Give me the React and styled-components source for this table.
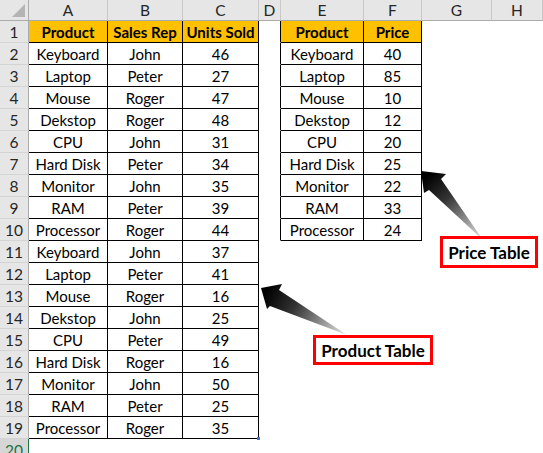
import styled, { createGlobalStyle } from 'styled-components';

const GlobalStyle = createGlobalStyle`
  html, body {
    margin: 0;
    padding: 0;
    background: #fff;
  }
  body {
    font-family: Lato, "Liberation Sans", sans-serif;
  }
`;

const Sheet = styled.div`
  position: relative;
  width: 543px;
  height: 453px;
  overflow: hidden;
  background: #fff;
`;

const Grid = styled.div`
  display: grid;
  grid-template-columns: 29px 79px 75px 76px 22px 83px 58px 70px 51px;
  grid-template-rows: 21px repeat(20, 22px);
  font-size: 15px;
  color: #000;
`;

const Corner = styled.div`
  position: relative;
  background: #e6e6e6;
  border-right: 1px solid #ababab;
  border-bottom: 1px solid #ababab;
  box-sizing: border-box;

  svg {
    position: absolute;
    right: 3px;
    bottom: 3px;
  }
`;

const ColHead = styled.div`
  display: flex;
  align-items: center;
  justify-content: center;
  background: #e6e6e6;
  border-right: 1px solid #c8c8c8;
  border-bottom: 1px solid #ababab;
  box-sizing: border-box;
  color: #262626;
  font-size: 15.5px;
`;

const RowHead = styled.div`
  display: flex;
  align-items: center;
  justify-content: center;
  background: ${(p) => (p.$active ? '#d6d6d6' : '#e6e6e6')};
  border-right: 1px solid ${(p) => (p.$active ? '#217346' : '#ababab')};
  border-bottom: 1px solid #d4d4d4;
  box-sizing: border-box;
  color: ${(p) => (p.$active ? '#217346' : '#262626')};
  font-size: 15.5px;
`;

const Cell = styled.div`
  position: relative;
  display: flex;
  align-items: center;
  justify-content: center;
  box-sizing: border-box;
  background: ${(p) => (p.$head ? '#ffc000' : 'transparent')};
  font-weight: ${(p) => (p.$head ? 700 : 400)};
  border-right: 1px solid ${(p) => (p.$right ? '#000' : 'transparent')};
  border-bottom: 1px solid ${(p) => (p.$bottom ? '#000' : 'transparent')};
  white-space: nowrap;
`;

const Handle = styled.span`
  position: absolute;
  right: -2px;
  bottom: -2px;
  width: 3px;
  height: 3px;
  background: #4472c4;
`;

const Arrows = styled.svg`
  position: absolute;
  left: 0;
  top: 0;
  pointer-events: none;
`;

const Label = styled.div`
  position: absolute;
  left: ${(p) => p.$x}px;
  top: ${(p) => p.$y}px;
  width: ${(p) => p.$w}px;
  height: ${(p) => p.$h}px;
  box-sizing: border-box;
  border: 3px solid #ff0000;
  background: #fff;
  display: flex;
  align-items: center;
  justify-content: center;
  font-weight: 700;
  font-size: 17px;
  color: #000;
`;

const letters = ['A', 'B', 'C', 'D', 'E', 'F', 'G', 'H'];

const products = [
  ['Keyboard', 'John', 46],
  ['Laptop', 'Peter', 27],
  ['Mouse', 'Roger', 47],
  ['Dekstop', 'Roger', 48],
  ['CPU', 'John', 31],
  ['Hard Disk', 'Peter', 34],
  ['Monitor', 'John', 35],
  ['RAM', 'Peter', 39],
  ['Processor', 'Roger', 44],
  ['Keyboard', 'John', 37],
  ['Laptop', 'Peter', 41],
  ['Mouse', 'Roger', 16],
  ['Dekstop', 'John', 25],
  ['CPU', 'Peter', 49],
  ['Hard Disk', 'Roger', 16],
  ['Monitor', 'John', 50],
  ['RAM', 'Peter', 25],
  ['Processor', 'Roger', 35],
];

const prices = [
  ['Keyboard', 40],
  ['Laptop', 85],
  ['Mouse', 10],
  ['Dekstop', 12],
  ['CPU', 20],
  ['Hard Disk', 25],
  ['Monitor', 22],
  ['RAM', 33],
  ['Processor', 24],
];

const cellsFor = (r) => {
  const inProd = r >= 1 && r <= 19;
  const inPrice = r >= 1 && r <= 10;
  const prod = r === 1 ? ['Product', 'Sales Rep', 'Units Sold'] : products[r - 2] || ['', '', ''];
  const price = r === 1 ? ['Product', 'Price'] : prices[r - 2] || ['', ''];
  const head = r === 1;
  return [
    <Cell key="A" $head={head} $right={inProd} $bottom={inProd}>{inProd && prod[0]}</Cell>,
    <Cell key="B" $head={head} $right={inProd} $bottom={inProd}>{inProd && prod[1]}</Cell>,
    <Cell key="C" $head={head} $right={inProd} $bottom={inProd}>
      {inProd && prod[2]}
      {r === 19 && <Handle />}
    </Cell>,
    <Cell key="D" $right={inPrice} />,
    <Cell key="E" $head={head && inPrice} $right={inPrice} $bottom={inPrice}>{inPrice && price[0]}</Cell>,
    <Cell key="F" $head={head && inPrice} $right={inPrice} $bottom={inPrice}>{inPrice && price[1]}</Cell>,
    <Cell key="G" />,
    <Cell key="H" />,
  ];
};

const Arrow = ({ id, points, from, to }) => (
  <>
    <defs>
      <linearGradient id={id} gradientUnits="userSpaceOnUse" x1={from[0]} y1={from[1]} x2={to[0]} y2={to[1]}>
        <stop offset="0" stopColor="#000" />
        <stop offset="0.35" stopColor="#333" />
        <stop offset="1" stopColor="#e6e6e6" />
      </linearGradient>
    </defs>
    <polygon points={points} fill={`url(#${id})`} />
  </>
);

const App = () => {
  const rows = Array.from({ length: 20 }, (_, i) => i + 1);
  return (
    <Sheet>
      <GlobalStyle />
      <Grid>
        <Corner>
          <svg width="13" height="13" viewBox="0 0 13 13">
            <polygon points="13,0 13,13 0,13" fill="#b4b4b4" />
          </svg>
        </Corner>
        {letters.map((l) => (
          <ColHead key={l}>{l}</ColHead>
        ))}
        {rows.map((r) => [
          <RowHead key={`h${r}`} $active={r === 20}>{r}</RowHead>,
          ...cellsFor(r).map((c) => ({ ...c, key: `${r}-${c.key}` })),
        ])}
      </Grid>

      <Arrows width="543" height="453" viewBox="0 0 543 453">
        <Arrow
          id="priceArrow"
          points="421,171 446,174 441,179 483,240 429,190 424,193"
          from={[425, 178]}
          to={[483, 240]}
        />
        <Arrow
          id="productArrow"
          points="261,288 282,284 279,290 347,335 270,306 267,309"
          from={[266, 292]}
          to={[347, 335]}
        />
      </Arrows>

      <Label $x={440} $y={236} $w={98} $h={32}>Price Table</Label>
      <Label $x={313} $y={335} $w={120} $h={30}>Product Table</Label>
    </Sheet>
  );
};

export default App;
